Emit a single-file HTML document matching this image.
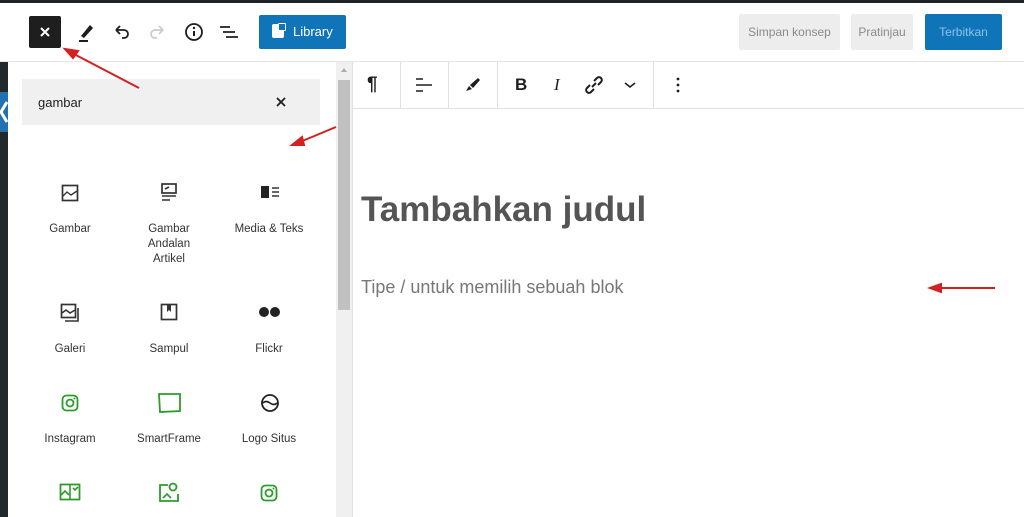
<!DOCTYPE html>
<html><head><meta charset="utf-8"><style>
*{box-sizing:border-box;margin:0;padding:0}
body{width:1024px;height:517px;overflow:hidden;background:#fff;font-family:"Liberation Sans",sans-serif;position:relative;color:#1e1e1e}
.a{position:absolute}
.lbl{position:absolute;width:100px;text-align:center;font-size:11.5px;color:#333;line-height:15px}
.ic{position:absolute}
</style></head><body>
<div class="a" style="left:0;top:0;width:1024px;height:3px;background:#1d2327"></div>
<div class="a" style="left:0;top:62px;width:8px;height:455px;background:#23282d"></div>
<div class="a" style="left:0;top:92px;width:8px;height:40px;background:#2271b1"></div>
<svg class="a" style="left:0;top:100px" width="8" height="24"><path d="M7 2 L1 12 L7 22" stroke="#fff" stroke-width="3" fill="none"/></svg>
<!-- header -->
<div class="a" style="left:0;top:61px;width:1024px;height:1px;background:#e6e6e6"></div>
<div class="a" style="left:29px;top:16px;width:32px;height:32px;background:#1e1e1e;border-radius:2px"></div>
<svg class="a" style="left:38px;top:25px" width="14" height="14"><path d="M3 3L11 11M11 3L3 11" stroke="#fff" stroke-width="2"/></svg>
<svg class="a" style="left:76px;top:21px" width="20" height="22"><path d="M5 15L14 4L17 7L8 17Z" fill="#1e1e1e"/><path d="M3 20H12" stroke="#1e1e1e" stroke-width="2"/></svg>
<svg class="a" style="left:112px;top:22px" width="20" height="20"><path d="M4 8H12A4 4 0 0 1 12 16H10M4 8L8 4M4 8L8 12" stroke="#1e1e1e" stroke-width="1.8" fill="none"/></svg>
<svg class="a" style="left:147px;top:22px" width="20" height="20"><path d="M16 8H8A4 4 0 0 0 8 16H10M16 8L12 4M16 8L12 12" stroke="#ccc" stroke-width="1.8" fill="none"/></svg>
<svg class="a" style="left:183px;top:21px" width="22" height="22"><circle cx="11" cy="11" r="8" stroke="#1e1e1e" stroke-width="1.8" fill="none"/><path d="M11 10V15" stroke="#1e1e1e" stroke-width="2"/><circle cx="11" cy="7" r="1.2" fill="#1e1e1e"/></svg>
<svg class="a" style="left:218px;top:22px" width="22" height="20"><path d="M2 5H12M5 10H17M8 15H20" stroke="#1e1e1e" stroke-width="1.8"/></svg>
<div class="a" style="left:259px;top:15px;width:87px;height:34px;background:#0f75b8;border-radius:2px;color:#fff;font-size:13px;line-height:34px;padding-left:34px">Library</div>
<div class="a" style="left:272px;top:24px;width:12px;height:14px;background:#fff;border-radius:2px"></div>
<div class="a" style="left:278px;top:23px;width:8px;height:8px;background:#0f75b8;border:1.5px solid #fff;border-radius:1px"></div>
<div class="a" style="left:739px;top:14px;width:101px;height:36px;background:#ededed;border-radius:2px;color:#8a8a8a;font-size:12px;line-height:36px;text-align:center">Simpan konsep</div>
<div class="a" style="left:851px;top:14px;width:62px;height:36px;background:#ededed;border-radius:2px;color:#8a8a8a;font-size:12px;line-height:36px;text-align:center">Pratinjau</div>
<div class="a" style="left:925px;top:14px;width:77px;height:36px;background:#0f75b8;border-radius:2px;color:#8ec3e6;font-size:12px;line-height:36px;text-align:center">Terbitkan</div>
<!-- sidebar -->
<div class="a" style="left:22px;top:79px;width:298px;height:46px;background:#f0f0f0"></div>
<div class="a" style="left:38px;top:95px;font-size:13px;color:#1e1e1e">gambar</div>
<svg class="a" style="left:275px;top:96px" width="12" height="12"><path d="M2 2L10 10M10 2L2 10" stroke="#1e1e1e" stroke-width="1.8"/></svg>
<div class="a" style="left:336px;top:62px;width:16px;height:455px;background:#f0f0f0"></div>
<div class="a" style="left:338px;top:80px;width:12px;height:230px;background:#c1c1c1"></div>
<svg class="a" style="left:339px;top:66px" width="10" height="8"><path d="M2 6L5 2L8 6Z" fill="#aaa"/></svg>
<div class="a" style="left:352px;top:62px;width:1px;height:455px;background:#e0e0e0"></div>
<!-- block items -->
<svg class="ic" style="left:61px;top:184px" width="18" height="18"><rect x="1.5" y="1.5" width="15" height="15" stroke="#333" stroke-width="1.7" fill="none"/><path d="M2 12L6 8L10 11L16 7" stroke="#333" stroke-width="1.4" fill="none"/></svg>
<div class="lbl" style="left:20px;top:222px">Gambar</div>
<svg class="ic" style="left:160px;top:183px" width="18" height="18"><rect x="2" y="1" width="14" height="9" stroke="#333" stroke-width="1.7" fill="none"/><path d="M5 6L9 4M2 13H16M2 17H10" stroke="#333" stroke-width="1.6"/></svg>
<div class="lbl" style="left:119px;top:222px">Gambar<br>Andalan<br>Artikel</div>
<svg class="ic" style="left:260px;top:184px" width="20" height="16"><rect x="1" y="2" width="8" height="12" fill="#222"/><path d="M12 4H19M12 8H19M12 12H19" stroke="#333" stroke-width="1.5"/></svg>
<div class="lbl" style="left:219px;top:222px">Media &amp; Teks</div>
<svg class="ic" style="left:60px;top:303px" width="20" height="20"><rect x="1.5" y="1.5" width="14" height="13" stroke="#333" stroke-width="1.7" fill="none"/><path d="M2 10L6 7L10 10L15 7M5 18H18V5" stroke="#333" stroke-width="1.6" fill="none"/></svg>
<div class="lbl" style="left:20px;top:342px">Galeri</div>
<svg class="ic" style="left:160px;top:303px" width="18" height="18"><rect x="1.5" y="1.5" width="15" height="15" stroke="#333" stroke-width="1.7" fill="none"/><path d="M7 2V9L9 7L11 9V2Z" fill="#333"/></svg>
<div class="lbl" style="left:119px;top:342px">Sampul</div>
<svg class="ic" style="left:258px;top:306px" width="24" height="12"><circle cx="6" cy="6" r="5" fill="#222"/><circle cx="17" cy="6" r="5" fill="#222"/></svg>
<div class="lbl" style="left:219px;top:342px">Flickr</div>
<svg class="ic" style="left:61px;top:394px" width="18" height="18"><rect x="1.5" y="1.5" width="15" height="15" rx="4" stroke="#2c9c2c" stroke-width="1.8" fill="none"/><circle cx="9" cy="9" r="3.5" stroke="#2c9c2c" stroke-width="1.8" fill="none"/><circle cx="13.5" cy="4.5" r="1" fill="#2c9c2c"/></svg>
<div class="lbl" style="left:20px;top:432px">Instagram</div>
<svg class="ic" style="left:157px;top:392px" width="26" height="22"><path d="M2 2H23V19L3 20Z" stroke="#2c9c2c" stroke-width="1.8" fill="none"/></svg>
<div class="lbl" style="left:119px;top:432px">SmartFrame</div>
<svg class="ic" style="left:260px;top:393px" width="20" height="20"><circle cx="10" cy="10" r="8" stroke="#222" stroke-width="1.8" fill="none"/><path d="M3 10Q6 7 10 10T17 10" stroke="#222" stroke-width="1.6" fill="none"/></svg>
<div class="lbl" style="left:219px;top:432px">Logo Situs</div>
<svg class="ic" style="left:59px;top:483px" width="22" height="18"><rect x="1.5" y="1.5" width="19" height="15" stroke="#2c9c2c" stroke-width="1.8" fill="none"/><path d="M2 12L6 8L10 12M11 2V16M14 5L16 7L19 4" stroke="#2c9c2c" stroke-width="1.6" fill="none"/></svg>
<svg class="ic" style="left:158px;top:481px" width="22" height="22"><path d="M10 4H2V20H20V13" stroke="#2c9c2c" stroke-width="1.8" fill="none"/><circle cx="15" cy="6" r="3.5" stroke="#2c9c2c" stroke-width="1.8" fill="none"/><path d="M5 17L9 13L13 17" stroke="#2c9c2c" stroke-width="1.6" fill="none"/></svg>
<svg class="ic" style="left:260px;top:484px" width="18" height="18"><rect x="1.5" y="1.5" width="15" height="15" rx="4" stroke="#2c9c2c" stroke-width="1.8" fill="none"/><circle cx="9" cy="9" r="3.5" stroke="#2c9c2c" stroke-width="1.8" fill="none"/><circle cx="13.5" cy="4.5" r="1" fill="#2c9c2c"/></svg>
<!-- toolbar -->
<div class="a" style="left:353px;top:108px;width:671px;height:1px;background:#e0e0e0"></div>
<div class="a" style="left:400px;top:62px;width:1px;height:46px;background:#e0e0e0"></div>
<div class="a" style="left:448px;top:62px;width:1px;height:46px;background:#e0e0e0"></div>
<div class="a" style="left:497px;top:62px;width:1px;height:46px;background:#e0e0e0"></div>
<div class="a" style="left:653px;top:62px;width:1px;height:46px;background:#e0e0e0"></div>
<div class="a" style="left:367px;top:74px;font-size:19px;font-weight:bold">¶</div>
<svg class="ic" style="left:414px;top:77px" width="20" height="16"><path d="M2 2H9M2 8H18M2 14H9" stroke="#1e1e1e" stroke-width="1.6"/></svg>
<svg class="ic" style="left:463px;top:76px" width="20" height="18"><path d="M3 15L6 10L9 13Z M7 9L15 2L17 4L10 12Z" fill="#1e1e1e"/></svg>
<div class="a" style="left:515px;top:75px;font-size:17px;font-weight:bold">B</div>
<div class="a" style="left:554px;top:75px;font-size:17px;font-style:italic;font-family:'Liberation Serif',serif">I</div>
<svg class="ic" style="left:584px;top:75px" width="20" height="20"><path d="M8 12L12 8M6 10L3 13A2.5 2.5 0 0 0 7 17L10 14M10 6L13 3A2.5 2.5 0 0 1 17 7L14 10" stroke="#1e1e1e" stroke-width="2" fill="none"/></svg>
<svg class="ic" style="left:623px;top:80px" width="14" height="10"><path d="M2 3L7 7L12 3" stroke="#1e1e1e" stroke-width="1.6" fill="none"/></svg>
<svg class="ic" style="left:674px;top:76px" width="8" height="18"><circle cx="4" cy="3" r="1.4" fill="#1e1e1e"/><circle cx="4" cy="9" r="1.4" fill="#1e1e1e"/><circle cx="4" cy="15" r="1.4" fill="#1e1e1e"/></svg>
<!-- editor -->
<div class="a" style="left:361px;top:190px;font-size:35px;font-weight:bold;color:#555">Tambahkan judul</div>
<div class="a" style="left:361px;top:277px;font-size:18px;color:#777">Tipe / untuk memilih sebuah blok</div>
<!-- red arrows -->
<svg class="a" style="left:0;top:0" width="1024" height="517">
<g stroke="#d42020" stroke-width="2" fill="#d42020">
<path d="M139 88L72 53"/><path d="M65 49L78 51L73 58Z"/>
<path d="M336 127L300 142"/><path d="M292 145L302 137L304 145Z"/>
<path d="M995 288L940 288"/><path d="M930 288L941 284L941 292Z"/>
</g></svg>
</body></html>
